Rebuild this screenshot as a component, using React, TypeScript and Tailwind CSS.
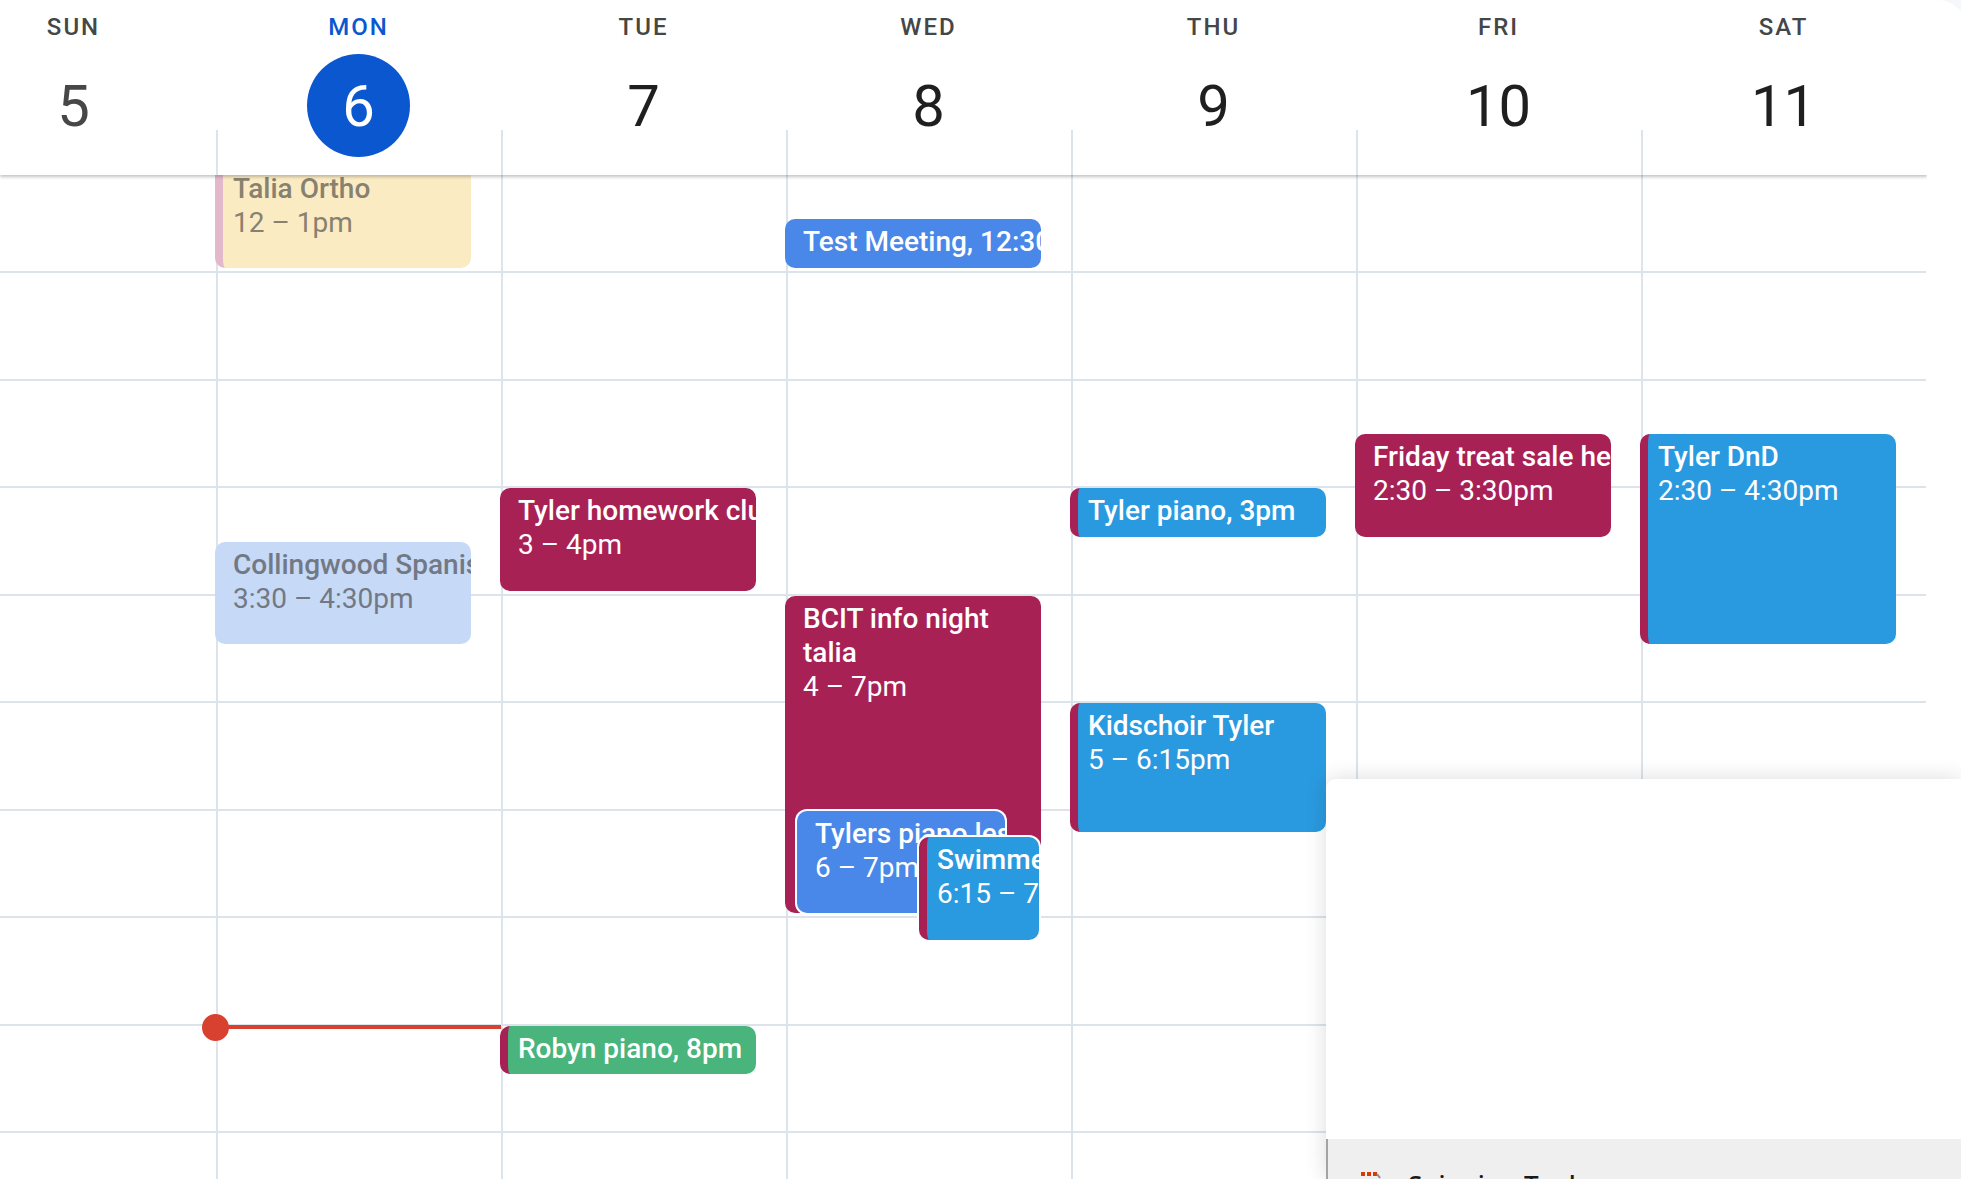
import React from "react";

const HOUR = 107.5;

type CalEvent = {
  day: number;
  start: number;
  end: number;
  title: string;
  time?: string;
  bg: string;
  text: string;
  stripe?: string;
  inline?: boolean;
  wrap?: boolean;
  ring?: boolean;
  left?: number;
  width?: number;
  z?: number;
};

const days = [
  { name: "SUN", num: 5, past: true },
  { name: "MON", num: 6, today: true },
  { name: "TUE", num: 7 },
  { name: "WED", num: 8 },
  { name: "THU", num: 9 },
  { name: "FRI", num: 10 },
  { name: "SAT", num: 11 },
];

const events: CalEvent[] = [
  {
    day: 1,
    start: 12,
    end: 13,
    title: "Talia Ortho",
    time: "12 – 1pm",
    bg: "bg-[#fbebc2]",
    text: "text-[#878170]",
    stripe: "border-[#e3b8ca]",
  },
  {
    day: 1,
    start: 15.5,
    end: 16.5,
    title: "Collingwood Spanish",
    time: "3:30 – 4:30pm",
    bg: "bg-[#c6d9f7]",
    text: "text-[#727985]",
  },
  {
    day: 2,
    start: 15,
    end: 16,
    title: "Tyler homework club",
    time: "3 – 4pm",
    bg: "bg-[#a82155]",
    text: "text-white",
  },
  {
    day: 2,
    start: 20,
    end: 20.5,
    title: "Robyn piano, 8pm",
    bg: "bg-[#49b47b]",
    text: "text-white",
    stripe: "border-[#a82155]",
    inline: true,
  },
  {
    day: 3,
    start: 12.5,
    end: 13,
    title: "Test Meeting, 12:30pm",
    bg: "bg-[#4987e9]",
    text: "text-white",
    inline: true,
  },
  {
    day: 3,
    start: 16,
    end: 19,
    title: "BCIT info night talia",
    time: "4 – 7pm",
    bg: "bg-[#a82155]",
    text: "text-white",
    wrap: true,
  },
  {
    day: 3,
    start: 18,
    end: 19,
    title: "Tylers piano lesson",
    time: "6 – 7pm",
    bg: "bg-[#4987e9]",
    text: "text-white",
    ring: true,
    left: 9,
    width: 208,
    z: 2,
  },
  {
    day: 3,
    start: 18.25,
    end: 19.25,
    title: "Swimmers",
    time: "6:15 – 7:15pm",
    bg: "bg-[#2a9ae0]",
    text: "text-white",
    stripe: "border-[#a82155]",
    ring: true,
    left: 131,
    width: 120,
    z: 3,
  },
  {
    day: 4,
    start: 15,
    end: 15.5,
    title: "Tyler piano, 3pm",
    bg: "bg-[#2a9ae0]",
    text: "text-white",
    stripe: "border-[#a82155]",
    inline: true,
  },
  {
    day: 4,
    start: 17,
    end: 18.25,
    title: "Kidschoir Tyler",
    time: "5 – 6:15pm",
    bg: "bg-[#2a9ae0]",
    text: "text-white",
    stripe: "border-[#a82155]",
  },
  {
    day: 5,
    start: 14.5,
    end: 15.5,
    title: "Friday treat sale helpers",
    time: "2:30 – 3:30pm",
    bg: "bg-[#a82155]",
    text: "text-white",
  },
  {
    day: 6,
    start: 14.5,
    end: 16.5,
    title: "Tyler DnD",
    time: "2:30 – 4:30pm",
    bg: "bg-[#2a9ae0]",
    text: "text-white",
    stripe: "border-[#a82155]",
  },
];

const cls = (...names: (string | false | undefined)[]) =>
  names.filter(Boolean).join(" ");

const EventChip = ({ ev }: { ev: CalEvent }) => (
  <div
    className={cls(
      "absolute overflow-hidden rounded-[10px] pt-[6px] text-[28px] leading-[34px]",
      ev.bg,
      ev.text,
      ev.stripe ? "border-l-8 pl-[10px]" : "pl-[18px]",
      ev.stripe,
      ev.ring && "ring-2 ring-white",
      ev.wrap && "pr-[14px]"
    )}
    style={{
      top: (ev.start - 12) * HOUR,
      height: (ev.end - ev.start) * HOUR - 5,
      left: ev.left ?? -3,
      width: ev.width ?? 256,
      zIndex: ev.z,
    }}
  >
    <div className={cls("font-medium", !ev.wrap && "whitespace-nowrap")}>
      {ev.title}
    </div>
    {!ev.inline && <div className="whitespace-nowrap">{ev.time}</div>}
  </div>
);

const NOW = 20;

export default function App() {
  return (
    <div className="relative h-[1179px] w-[1961px] overflow-hidden bg-[#f5f7fb] font-['Roboto',sans-serif]">
      <div className="h-full w-[1966px] rounded-tr-[28px] bg-white">
        <div className="h-full w-[1927px] overflow-hidden">
          {/* day header */}
          <div className="relative z-10 flex h-[175px] bg-white shadow-[0_2px_3px_rgba(60,64,67,0.3)]">
            <div className="-ml-[69px] flex">
              {days.map((d, i) => (
                <div key={d.name} className="flex w-[285px] shrink-0 flex-col">
                  <div className="flex h-[130px] flex-col items-center pt-[11px]">
                    <span
                      className={cls(
                        "text-[24px] leading-[32px] font-medium tracking-[2px]",
                        d.today ? "text-[#0b57d0]" : "text-[#444746]"
                      )}
                    >
                      {d.name}
                    </span>
                    <span
                      className={cls(
                        "mt-[11px] flex h-[103px] w-[103px] shrink-0 items-center justify-center rounded-full text-[58px] leading-none",
                        d.today
                          ? "bg-[#0b57d0] text-white"
                          : d.past
                          ? "text-[#474747]"
                          : "text-[#1f1f1f]"
                      )}
                    >
                      {d.num}
                    </span>
                  </div>
                  <div
                    className={cls(
                      "h-[45px]",
                      i > 0 && "border-l-2 border-[#dde3ea]"
                    )}
                  />
                </div>
              ))}
            </div>
          </div>

          {/* time grid */}
          <div className="h-[1004px] overflow-hidden">
            <div className="-mt-[9.5px] -ml-[69px] flex">
              {days.map((d, i) => (
                <div
                  key={d.name}
                  className={cls(
                    "relative w-[285px] shrink-0",
                    i > 0 && "border-l-2 border-[#dde3ea]"
                  )}
                >
                  {Array.from({ length: 10 }).map((_, h) => (
                    <div
                      key={h}
                      className="h-[107.5px] border-b-2 border-[#dde3ea]"
                    />
                  ))}
                  {events
                    .filter((e) => e.day === i)
                    .map((e) => (
                      <EventChip key={e.title} ev={e} />
                    ))}
                  {d.today && (
                    <>
                      <div
                        className="absolute right-0 left-[-2px] z-20 h-[4px] bg-[#d8412f]"
                        style={{ top: (NOW - 12) * HOUR - 1 }}
                      />
                      <div
                        className="absolute left-[-16px] z-20 h-[27px] w-[27px] rounded-full bg-[#d8412f]"
                        style={{ top: (NOW - 12) * HOUR - 12 }}
                      />
                    </>
                  )}
                </div>
              ))}
            </div>
          </div>
        </div>
      </div>

      {/* snipping window over the corner */}
      <div className="absolute top-[779px] right-0 left-[1326px] bottom-0 z-30 flex flex-col rounded-tl-[10px] bg-white shadow-[0_0_22px_rgba(0,0,0,0.14)]">
        <div className="flex-1" />
        <div className="flex h-[40px] gap-[27px] border-l-2 border-[#a3a3a3] bg-[#efefef] pt-[32px] pl-[33px]">
          <svg width="20" height="20" viewBox="0 0 20 20" className="mt-[1px] shrink-0">
            <rect x="0" y="0" width="4" height="4" fill="#d83b01" />
            <rect x="6" y="0" width="4" height="4" fill="#d83b01" />
            <rect x="12" y="0" width="4" height="4" fill="#d83b01" />
            <path d="M16 2 L19 6" stroke="#8a8a8a" strokeWidth="2" />
          </svg>
          <span className="font-['Noto_Sans',sans-serif] text-[26px] leading-none font-medium text-[#1a1a1a]">
            Snipping Tool
          </span>
        </div>
      </div>
    </div>
  );
}
